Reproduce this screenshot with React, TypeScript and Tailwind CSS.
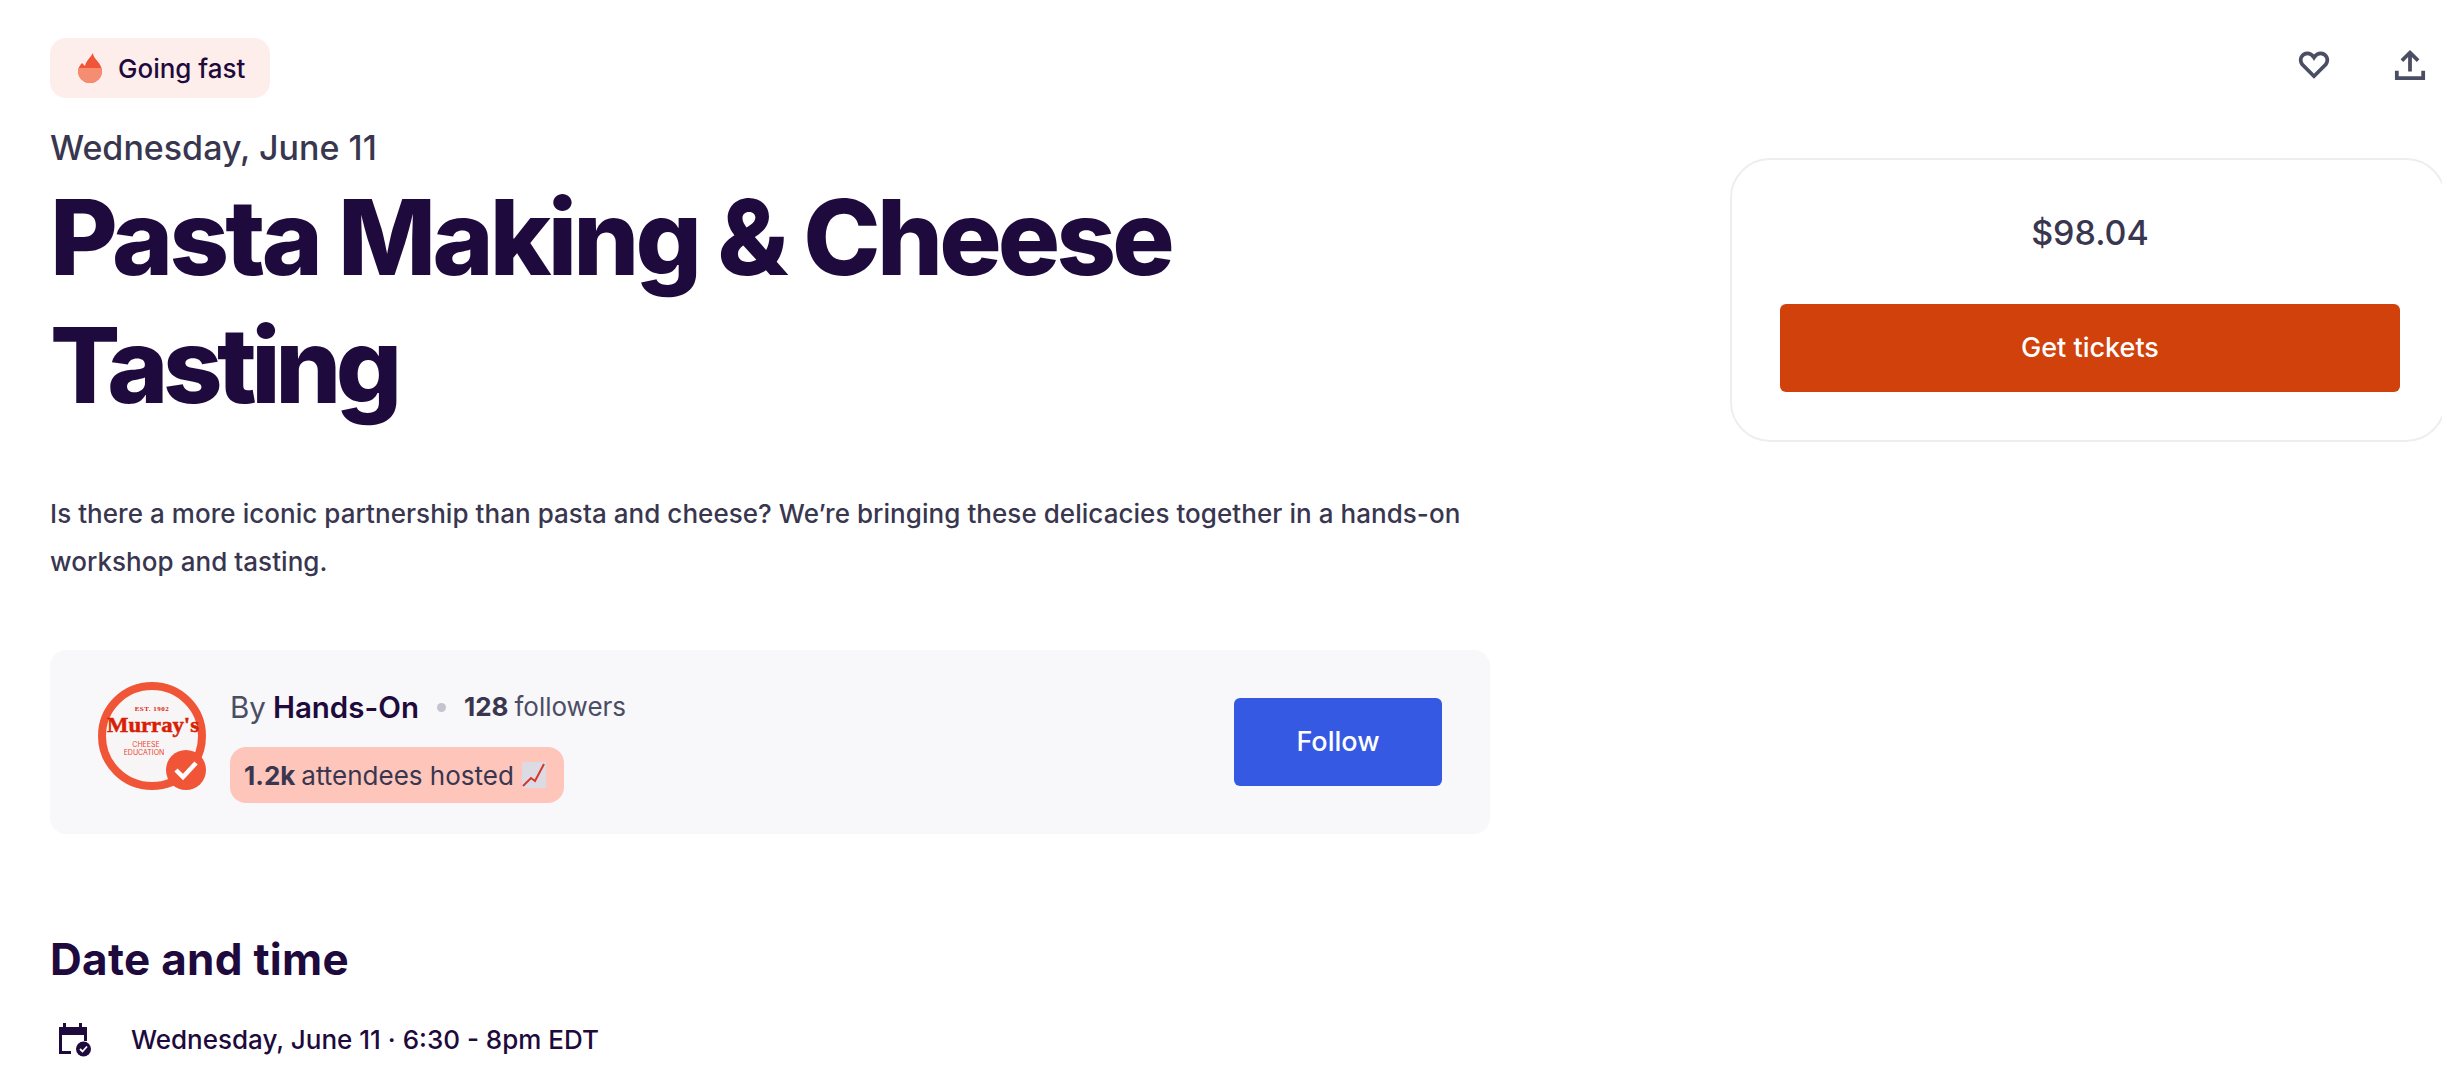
import { FC } from 'react'

const FlameIcon: FC = () => (
  <svg width="24" height="30" viewBox="0 0 24 30" className="shrink-0">
    <path d="M15 0C15 6 24 10 24 18A12 12 0 0 1 0 18C0 15 2 12 4 10L7 13C8 8 12 5 15 0z" fill="#f05537" />
    <path d="M0.300 15H23.700C23.900 16 24 17 24 18A12 12 0 0 1 0 18C0 17 0.100 16 0.300 15z" fill="#f58d73" />
  </svg>
)

const LogoBadge: FC = () => (
  <svg width="112" height="110" viewBox="0 0 112 110" className="-mt-[10px] shrink-0">
    <circle cx="54" cy="54" r="50" fill="#f8f5f6" stroke="#f05537" strokeWidth="8" />
    <text x="54" y="29" textAnchor="middle" fontSize="7" fontFamily="'Liberation Serif', serif" fontWeight="700" fill="#d81e05" letterSpacing="0.5">EST. 1902</text>
    <text x="55" y="50" textAnchor="middle" fontSize="22" fontFamily="'Liberation Serif', serif" fontWeight="700" fill="#d81e05" stroke="#d81e05" strokeWidth="0.500" textLength="92" lengthAdjust="spacingAndGlyphs">Murray's</text>
    <text x="48" y="65" textAnchor="middle" fontSize="7" fontFamily="Inter, sans-serif" fill="#e8452c">CHEESE</text>
    <text x="46" y="73" textAnchor="middle" fontSize="7" fontFamily="Inter, sans-serif" fill="#e8452c">EDUCATION</text>
    <circle cx="88" cy="88" r="20" fill="#f05537" />
    <path d="M78 88l7 7 13-14" fill="none" stroke="#fff" strokeWidth="4.500" />
  </svg>
)

const CalendarCheck: FC = () => (
  <svg width="32" height="34" viewBox="0 0 32 34" className="shrink-0">
    <path d="M4 0h3v4h13V0h3v4h5v14h-3v-6H3v16h9v3H0V4h4z" fill="#1e0a3c" />
    <circle cx="24.500" cy="26" r="7.500" fill="#1e0a3c" />
    <path d="M21 26l2.500 2.500 4.500-5" fill="none" stroke="#fff" strokeWidth="1.800" />
  </svg>
)

const App: FC = () => {
  return (
    <div className="flex h-[1092px] w-[2442px] overflow-hidden bg-white font-['Inter',sans-serif]">
      <main className="w-[1490px] shrink-0 pl-[50px] pt-[38px]">
        <div className="flex h-[60px] w-[220px] items-center gap-[16px] rounded-[16px] bg-[#feeeeb] pl-[28px]">
          <FlameIcon />
          <span className="text-[26px] font-medium text-[#1e0a3c]">Going fast</span>
        </div>
        <p className="mt-[30px] text-[34px] font-medium leading-[40px] text-[#39364f]">Wednesday, June 11</p>
        <h1 className="mt-[5px] w-[1300px] text-[104px] font-extrabold leading-[128px] tracking-[-3.800px] text-[#1e0a3c]">
          Pasta Making &amp; Cheese <span className="tracking-[-5.500px]">Tasting</span>
        </h1>
        <p className="mt-[61px] w-[1440px] text-[26px] font-medium leading-[48px] tracking-[0.050px] text-[#39364f]">
          Is there a more iconic partnership than pasta and cheese? We’re bringing these delicacies together in a hands-on workshop and tasting.
        </p>
        <section className="mt-[64px] flex h-[184px] w-[1440px] items-center justify-between rounded-[16px] bg-[#f8f7fa] pl-[48px] pr-[48px]">
          <div className="flex items-center gap-[20px]">
            <LogoBadge />
            <div className="mt-[4px] flex flex-col gap-[18px]">
              <div className="flex items-center text-[29.500px] leading-[44px] text-[#39364f]">
                <span className="text-[#4b4d63]">By</span>
                <span className="ml-[7px] font-semibold text-[#1e0a3c]">Hands-On</span>
                <span className="mx-[18px] h-[9px] w-[9px] rounded-full bg-[#c4c4d0]" />
                <span className="text-[26px] font-bold">128</span>
                <span className="ml-[6px] text-[26px] text-[#4b4d63]">followers</span>
              </div>
              <div className="flex h-[56px] w-[334px] items-center rounded-[16px] bg-[#fec5bb] pl-[14px] text-[26px] text-[#39364f]">
                <span className="font-bold">1.2k</span>
                <span className="ml-[6px]">attendees hosted</span>
                <svg width="24" height="26" viewBox="0 0 24 26" className="ml-[8px]">
                  <rect width="24" height="26" fill="#dcdbe4" />
                  <path d="M1 24l8-8 4 3L22 2" fill="none" stroke="#d9362a" strokeWidth="2" />
                </svg>
              </div>
            </div>
          </div>
          <button className="h-[88px] w-[208px] rounded-[6px] bg-[#3659e3] text-[27px] font-medium text-white">Follow</button>
        </section>
        <h2 className="mt-[98px] text-[44px] font-bold leading-[54px] tracking-[0.300px] text-[#1e0a3c]">Date and time</h2>
        <div className="mt-[34px] flex items-center gap-[40px] pl-[9px]">
          <CalendarCheck />
          <span className="text-[26px] font-medium text-[#1e0a3c]">Wednesday, June 11 · 6:30 - 8pm EDT</span>
        </div>
      </main>
      <aside className="min-w-0 flex-1 pl-[240px]">
        <div className="flex h-[158px] w-[712px] items-center justify-end gap-[64px] pb-[28px] pr-[16px]">
          <svg width="32" height="28" viewBox="0 0 34 30" fill="none" stroke="#4b4d63" strokeWidth="4">
            <path d="M17 27L4.500 14.500C0.500 9 4 2.500 10 2.500c3 0 5 1.500 7 4.500 2-3 4-4.500 7-4.500 6 0 9.500 6.500 5.500 12z" />
          </svg>
          <svg width="32" height="32" viewBox="0 0 34 32" fill="#4b4d63">
            <path d="M17 0l10 10-2.800 2.800-5.200-5.200V23h-4V7.600l-5.200 5.200L7 10z" />
            <path d="M1 22h4v6h24v-6h4v10H1z" />
          </svg>
        </div>
        <div className="flex h-[284px] w-[716px] flex-col rounded-[40px] border-2 border-[#eeedf2] pl-[48px] pt-[50px]">
          <p className="w-[620px] text-center text-[34px] font-medium leading-[46px] text-[#39364f]">$98.04</p>
          <button className="mt-[48px] h-[88px] w-[620px] shrink-0 rounded-[6px] bg-[#d1410c] text-[27px] font-medium text-white">Get tickets</button>
        </div>
      </aside>
    </div>
  )
}

export default App
